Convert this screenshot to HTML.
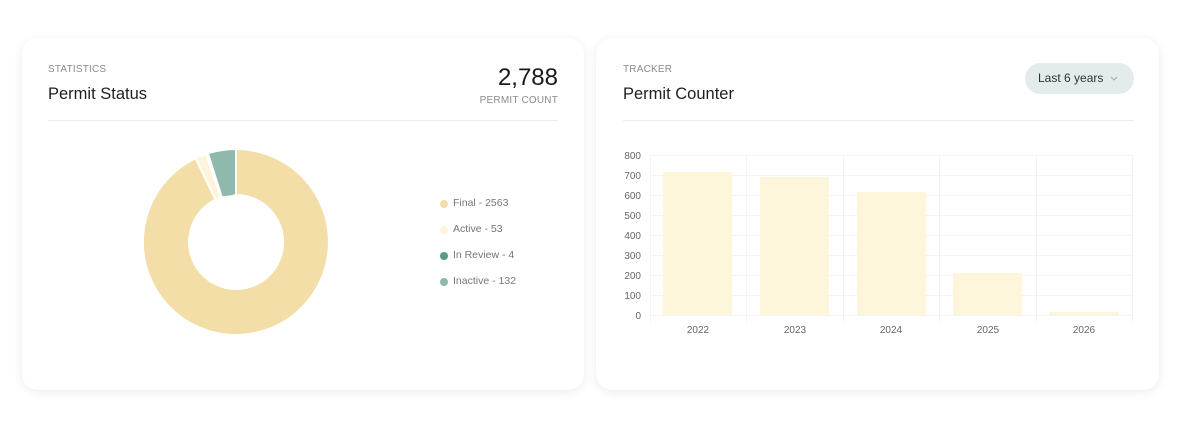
<!DOCTYPE html>
<html><head><style>
body{margin:0;width:1200px;height:429px;background:#fff;font-family:"Liberation Sans",sans-serif;position:relative;overflow:hidden}
.card{position:absolute;top:38px;height:352px;background:#fff;border-radius:16px;box-shadow:0 2px 10px rgba(0,0,0,0.08)}
.t{position:absolute;white-space:nowrap}
.small{font-size:10px;color:#8a8a8a;letter-spacing:0.2px}
.title{font-size:16.5px;color:#1f1f1f}
.line{position:absolute;height:1px;background:#ececec}
.leg{position:absolute;font-size:10.5px;color:#777;white-space:nowrap}
.leg i{position:absolute;left:-13px;top:3px;width:8px;height:8px;border-radius:50%}
</style></head><body>
<div class="card" style="left:22px;width:562px"></div>
<div class="card" style="left:596px;width:563px"></div>

<div class="t small" style="left:48px;top:64px">STATISTICS</div>
<div class="t title" style="left:48px;top:85px">Permit Status</div>
<div class="t" style="right:642px;top:64px;font-size:24px;color:#1a1a1a">2,788</div>
<div class="t small" style="right:642px;top:95px">PERMIT COUNT</div>
<div class="line" style="left:48px;width:510px;top:120px"></div>

<svg style="position:absolute;left:0;top:0" width="600" height="429">
<g transform="translate(236,242)" stroke="#fff" stroke-width="2">
<path d="M0,-93 A93,93 0 1 1 -40.4,-83.8 L-20.4,-42.3 A47,47 0 1 0 0,-47 Z" fill="#f3dea8"/>
<path d="M-40.4,-83.8 A93,93 0 0 1 -29.9,-88.1 L-15.1,-44.5 A47,47 0 0 1 -20.4,-42.3 Z" fill="#fdf4d9"/>
<path d="M-29.9,-88.1 A93,93 0 0 1 -28.1,-88.7 L-14.2,-44.8 A47,47 0 0 1 -15.1,-44.5 Z" fill="#5a9a85"/>
<path d="M-28.1,-88.7 A93,93 0 0 1 0,-93 L0,-47 A47,47 0 0 1 -14.2,-44.8 Z" fill="#8fb9ad"/>
</g></svg>

<div class="leg" style="left:453px;top:197px"><i style="background:#f3dea8"></i>Final - 2563</div>
<div class="leg" style="left:453px;top:223px"><i style="background:#fdf4d9"></i>Active - 53</div>
<div class="leg" style="left:453px;top:249px"><i style="background:#5a9a85"></i>In Review - 4</div>
<div class="leg" style="left:453px;top:275px"><i style="background:#8fb9ad"></i>Inactive - 132</div>

<div class="t small" style="left:623px;top:64px">TRACKER</div>
<div class="t title" style="left:623px;top:85px">Permit Counter</div>
<div style="position:absolute;left:1025px;top:63px;width:109px;height:31px;border-radius:16px;background:#e3ecea"></div>
<div class="t" style="left:1038px;top:71px;font-size:12px;color:#333">Last 6 years</div>
<svg style="position:absolute;left:1110px;top:76px" width="8" height="6"><path d="M1,1 L4,4 L7,1" stroke="#aaa" fill="none" stroke-width="1"/></svg>
<div class="line" style="left:623px;width:511px;top:120px"></div>

<svg style="position:absolute;left:600px;top:140px" width="560" height="210" font-family="Liberation Sans, sans-serif" font-size="10" fill="#666">
<g stroke="#f3f3f3" stroke-width="1">
<line x1="50" x2="532" y1="15.5" y2="15.5"/><line x1="50" x2="532" y1="35.5" y2="35.5"/><line x1="50" x2="532" y1="55.5" y2="55.5"/><line x1="50" x2="532" y1="75.5" y2="75.5"/><line x1="50" x2="532" y1="95.5" y2="95.5"/><line x1="50" x2="532" y1="115.5" y2="115.5"/><line x1="50" x2="532" y1="135.5" y2="135.5"/><line x1="50" x2="532" y1="155.5" y2="155.5"/><line x1="50" x2="532" y1="175.5" y2="175.5"/>
<line x1="50.5" x2="50.5" y1="15" y2="182"/><line x1="146.5" x2="146.5" y1="15" y2="182"/><line x1="243.5" x2="243.5" y1="15" y2="182"/><line x1="339.5" x2="339.5" y1="15" y2="182"/><line x1="436.5" x2="436.5" y1="15" y2="182"/><line x1="532.5" x2="532.5" y1="15" y2="182"/>
</g>
<g fill="#fef6db">
<rect x="63" y="32" width="69" height="143"/><rect x="160" y="37" width="69" height="138"/><rect x="257" y="52" width="69" height="123"/><rect x="353" y="133" width="69" height="42"/><rect x="449" y="172" width="70" height="3"/>
</g>
<g text-anchor="end"><text x="41" y="19">800</text><text x="41" y="39">700</text><text x="41" y="59">600</text><text x="41" y="79">500</text><text x="41" y="99">400</text><text x="41" y="119">300</text><text x="41" y="139">200</text><text x="41" y="159">100</text><text x="41" y="179">0</text></g>
<g text-anchor="middle"><text x="98" y="193">2022</text><text x="195" y="193">2023</text><text x="291" y="193">2024</text><text x="388" y="193">2025</text><text x="484" y="193">2026</text></g>
</svg>
</body></html>
